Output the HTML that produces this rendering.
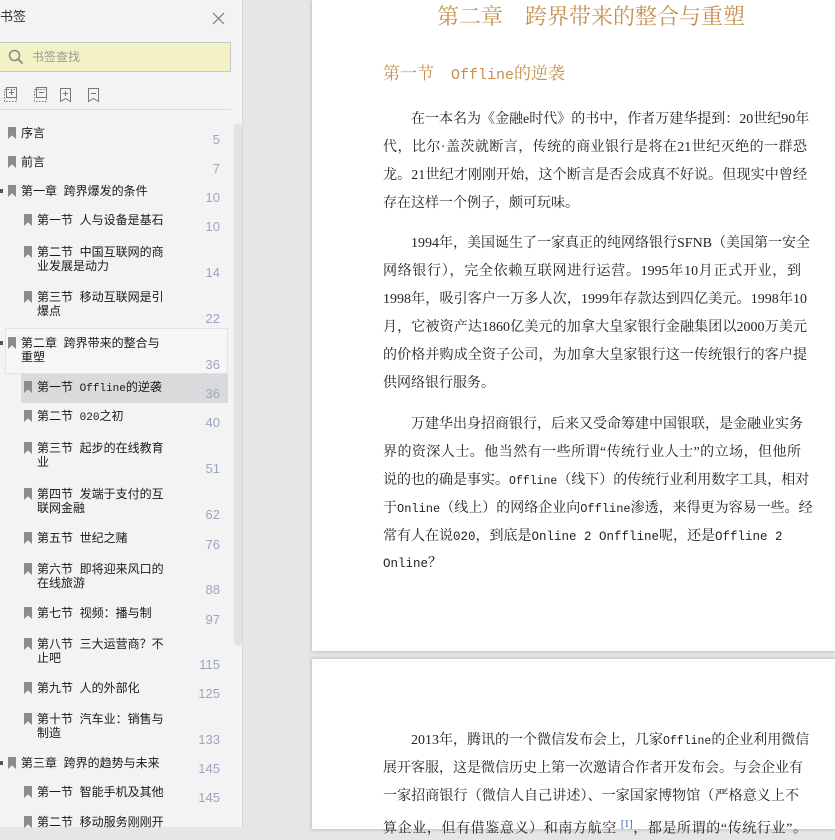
<!DOCTYPE html>
<html><head><meta charset="utf-8"><style>
*{margin:0;padding:0;box-sizing:border-box}
body{width:835px;height:827px;overflow:hidden;background:#e6e6e6;position:relative;font-family:"Liberation Sans","Noto Sans CJK SC",sans-serif}
#sb{position:absolute;left:0;top:0;width:243px;height:827px;background:#f3f3f3;border-right:1px solid #d6d6d6}
.a{position:absolute}
.t{position:absolute;font-size:12px;line-height:14px;color:#1a1a1a;white-space:nowrap}
.n{position:absolute;font-size:13px;color:#9aa6c0;right:22px;text-align:right}
.bk{position:absolute;width:8px;height:12px;background:#8c8c8c;clip-path:polygon(0 0,100% 0,100% 100%,50% 70%,0 100%)}
.pg{position:absolute;left:312px;right:0;background:#fff}
.l{position:absolute;left:383px;width:424px;font-family:"Liberation Serif","Noto Serif CJK SC",serif;font-size:14px;line-height:20px;height:20px;color:#222;text-align:justify;text-align-last:justify;white-space:nowrap}
.l.e{text-align-last:left}
.m{font-family:"Liberation Mono","Noto Serif CJK SC",monospace;font-size:12.5px}
</style></head><body>
<div id="sb">
<div class="t" style="left:0;top:10px;font-size:13px;color:#333">书签</div>
<svg class="a" style="left:212px;top:12px" width="13" height="13"><path d="M1 1L12 12M12 1L1 12" stroke="#888" stroke-width="1.3"/></svg>
<div class="a" style="left:-2px;top:42px;width:233px;height:30px;background:#f2f2c6;border:1px solid #c8c8c8"></div>
<svg class="a" style="left:8px;top:49px" width="16" height="16"><circle cx="6.5" cy="6.5" r="5" stroke="#888" stroke-width="1.5" fill="none"/><path d="M10 10L14.5 14.5" stroke="#888" stroke-width="1.8"/></svg>
<div class="t" style="left:32px;top:50px;font-size:12px;color:#999">书签查找</div>
<svg class="a" style="left:2px;top:87px" width="100" height="16" fill="none" stroke="#777" stroke-width="1">
<rect x="2.5" y="2.5" width="12" height="12" stroke-dasharray="1.5 1.5"/><rect x="4.5" y="0.5" width="10" height="10"/><path d="M9.5 3v5M7 5.5h5"/>
<rect x="32.5" y="2.5" width="12" height="12" stroke-dasharray="1.5 1.5"/><rect x="34.5" y="0.5" width="10" height="10"/><path d="M37 5.5h5"/>
<path d="M58.5 1.5h10v13l-5-3-5 3z"/><path d="M63.5 4v5M61 6.5h5"/>
<path d="M86.5 1.5h10v13l-5-3-5 3z"/><path d="M89 6.5h5"/></svg>
<div class="a" style="left:0;top:109px;width:231px;height:1px;background:#ddd"></div>
<div class="a" style="left:234px;top:124px;width:8px;height:522px;background:#e3e3e3;border-radius:4px"></div>
<div class="a" style="left:5px;top:328px;width:223px;height:46px;border:1px solid #e2e2e2;background:#f6f6f6"></div>
<div class="a" style="left:21px;top:374px;width:207px;height:29px;background:#dadadd"></div>

<div class="bk" style="left:8px;top:127px"></div><div class="t" style="left:21px;top:126px">序言</div><div class="n" style="top:132px">5</div>
<div class="bk" style="left:8px;top:156px"></div><div class="t" style="left:21px;top:155px">前言</div><div class="n" style="top:161px">7</div>
<div class="a" style="left:0;top:189px;width:3px;height:4px;background:#555"></div><div class="bk" style="left:8px;top:185px"></div><div class="t" style="left:21px;top:184px">第一章&nbsp; 跨界爆发的条件</div><div class="n" style="top:190px">10</div>
<div class="bk" style="left:24px;top:214px"></div><div class="t" style="left:37px;top:213px">第一节&nbsp; 人与设备是基石</div><div class="n" style="top:219px">10</div>
<div class="bk" style="left:24px;top:246px"></div><div class="t" style="left:37px;top:245px">第二节&nbsp; 中国互联网的商<br>业发展是动力</div><div class="n" style="top:265px">14</div>
<div class="bk" style="left:24px;top:291px"></div><div class="t" style="left:37px;top:290px">第三节&nbsp; 移动互联网是引<br>爆点</div><div class="n" style="top:311px">22</div>
<div class="a" style="left:0;top:341px;width:3px;height:4px;background:#555"></div><div class="bk" style="left:8px;top:337px"></div><div class="t" style="left:21px;top:336px">第二章&nbsp; 跨界带来的整合与<br>重塑</div><div class="n" style="top:357px">36</div>
<div class="bk" style="left:24px;top:381px"></div><div class="t" style="left:37px;top:380px">第一节&nbsp; <span style="font-family:'Liberation Mono',monospace;font-size:11px">Offline</span>的逆袭</div><div class="n" style="top:386px">36</div>
<div class="bk" style="left:24px;top:410px"></div><div class="t" style="left:37px;top:409px">第二节&nbsp; <span style="font-family:'Liberation Mono',monospace;font-size:11px">020</span>之初</div><div class="n" style="top:415px">40</div>
<div class="bk" style="left:24px;top:442px"></div><div class="t" style="left:37px;top:441px">第三节&nbsp; 起步的在线教育<br>业</div><div class="n" style="top:461px">51</div>
<div class="bk" style="left:24px;top:488px"></div><div class="t" style="left:37px;top:487px">第四节&nbsp; 发端于支付的互<br>联网金融</div><div class="n" style="top:507px">62</div>
<div class="bk" style="left:24px;top:532px"></div><div class="t" style="left:37px;top:531px">第五节&nbsp; 世纪之赌</div><div class="n" style="top:537px">76</div>
<div class="bk" style="left:24px;top:563px"></div><div class="t" style="left:37px;top:562px">第六节&nbsp; 即将迎来风口的<br>在线旅游</div><div class="n" style="top:582px">88</div>
<div class="bk" style="left:24px;top:607px"></div><div class="t" style="left:37px;top:606px">第七节&nbsp; 视频：播与制</div><div class="n" style="top:612px">97</div>
<div class="bk" style="left:24px;top:638px"></div><div class="t" style="left:37px;top:637px">第八节&nbsp; 三大运营商？不<br>止吧</div><div class="n" style="top:657px">115</div>
<div class="bk" style="left:24px;top:682px"></div><div class="t" style="left:37px;top:681px">第九节&nbsp; 人的外部化</div><div class="n" style="top:686px">125</div>
<div class="bk" style="left:24px;top:713px"></div><div class="t" style="left:37px;top:712px">第十节&nbsp; 汽车业：销售与<br>制造</div><div class="n" style="top:732px">133</div>
<div class="a" style="left:0;top:761px;width:3px;height:4px;background:#555"></div><div class="bk" style="left:8px;top:757px"></div><div class="t" style="left:21px;top:756px">第三章&nbsp; 跨界的趋势与未来</div><div class="n" style="top:761px">145</div>
<div class="bk" style="left:24px;top:786px"></div><div class="t" style="left:37px;top:785px">第一节&nbsp; 智能手机及其他</div><div class="n" style="top:790px">145</div>
<div class="bk" style="left:24px;top:816px"></div><div class="t" style="left:37px;top:815px">第二节&nbsp; 移动服务刚刚开</div>
</div>

<div class="pg" style="top:0;height:651px;box-shadow:0 0 4px rgba(0,0,0,.25)"></div>
<div class="pg" style="top:659px;height:170px;box-shadow:0 0 4px rgba(0,0,0,.25)"></div>

<div class="a" style="left:437px;top:3px;font-family:'Liberation Serif','Noto Serif CJK SC',serif;font-size:22px;line-height:28px;color:#c4914f;white-space:nowrap">第二章　跨界带来的整合与重塑</div>
<div class="a" style="left:383px;top:62px;font-family:'Liberation Serif','Noto Serif CJK SC',serif;font-size:17px;line-height:24px;color:#c4914f;white-space:nowrap">第一节　<span style="font-family:'Liberation Mono',monospace;font-size:15px">Offline</span>的逆袭</div>

<div class="l" style="top:110px;left:411px;width:396px">在一本名为《金融e时代》的书中，作者万建华提到：20世纪90年</div>
<div class="l" style="top:138px">代，比尔·盖茨就断言，传统的商业银行是将在21世纪灭绝的一群恐</div>
<div class="l" style="top:166px">龙。21世纪才刚刚开始，这个断言是否会成真不好说。但现实中曾经</div>
<div class="l e" style="top:194px">存在这样一个例子，颇可玩味。</div>

<div class="l" style="top:234px;left:411px;width:396px">1994年，美国诞生了一家真正的纯网络银行SFNB（美国第一安全</div>
<div class="l" style="top:262px;width:418px">网络银行），完全依赖互联网进行运营。1995年10月正式开业，到</div>
<div class="l" style="top:290px">1998年，吸引客户一万多人次，1999年存款达到四亿美元。1998年10</div>
<div class="l" style="top:318px">月，它被资产达1860亿美元的加拿大皇家银行金融集团以2000万美元</div>
<div class="l" style="top:346px">的价格并购成全资子公司，为加拿大皇家银行这一传统银行的客户提</div>
<div class="l e" style="top:374px">供网络银行服务。</div>

<div class="l" style="top:415px;left:411px;width:390px">万建华出身招商银行，后来又受命筹建中国银联，是金融业实务</div>
<div class="l" style="top:443px;width:418px">界的资深人士。他当然有一些所谓“传统行业人士”的立场，但他所</div>
<div class="l" style="top:471px">说的也的确是事实。<span class="m" style="font-size:11.5px">Offline</span>（线下）的传统行业利用数字工具，相对</div>
<div class="l" style="top:499px">于<span class="m" style="font-size:12px">Online</span>（线上）的网络企业向<span class="m" style="font-size:12px">Offline</span>渗透，来得更为容易一些。经</div>
<div class="l e" style="top:527px">常有人在说<span class="m">020</span>，到底是<span class="m">Online 2 Onffline</span>呢，还是<span class="m">Offline 2</span></div>
<div class="l e" style="top:554px"><span class="m">Online</span>？</div>

<div class="l" style="top:731px;left:411px;width:396px">2013年，腾讯的一个微信发布会上，几家<span class="m" style="font-size:11.5px">Offline</span>的企业利用微信</div>
<div class="l" style="top:759px;width:416px">展开客服，这是微信历史上第一次邀请合作者开发布会。与会企业有</div>
<div class="l" style="top:787px;width:416px">一家招商银行（微信人自己讲述）、一家国家博物馆（严格意义上不</div>
<div class="l" style="top:815px">算企业，但有借鉴意义）和南方航空 <sup style="color:#2a55c8;font-size:10px">[1]</sup>，都是所谓的“传统行业”。</div>
</body></html>
